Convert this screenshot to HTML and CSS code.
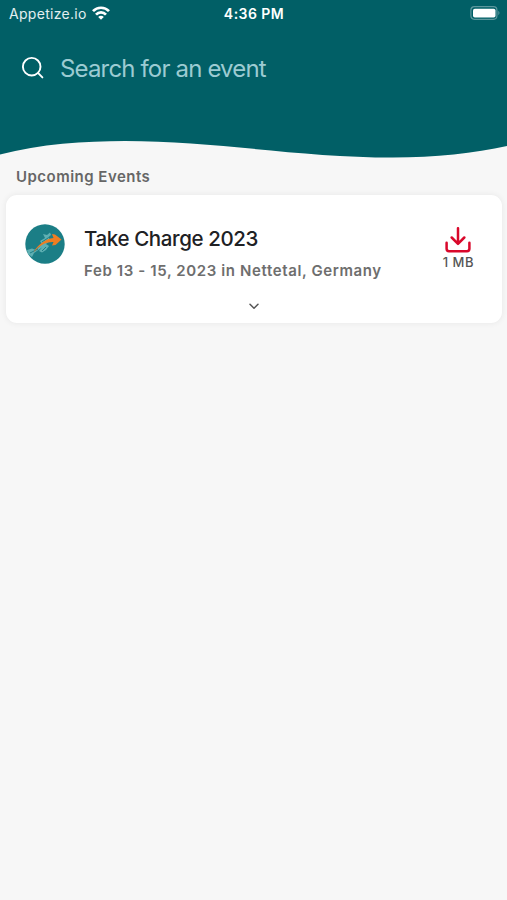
FILE: index.html
```
<!DOCTYPE html>
<html lang="en">
<head>
    <meta charset="UTF-8">
    <meta name="viewport" content="width=device-width, initial-scale=1.0">
    <title>Upcoming Events</title>
    <link rel="stylesheet" href="styles.css">
</head>
<body>

    <header class="header">
        <!-- Status bar -->
        <div class="status">
            <div class="carrier">
                <span class="carrierName">Appetize.io</span>
                <svg width="18" height="14" viewBox="0 0 18 14" fill="none" stroke="#fff" stroke-width="2.7">
                    <path d="M1 5.2C5.3 .6 12.7 .6 17 5.2"/>
                    <path d="M4 8.6C6.8 5.6 11.2 5.6 14 8.6"/>
                    <path d="M9 13.8L6.2 10.9C7.8 9.4 10.2 9.4 11.8 10.9Z" fill="#fff" stroke="none"/>
                </svg>
            </div>
            <span class="time">4:36 PM</span>
            <svg class="battery" width="30" height="14" viewBox="0 0 30 14">
                <rect x=".9" y=".7" width="26" height="12.6" rx="3.5" fill="none" stroke="#5c979d" stroke-width="1.2"/>
                <rect x="3" y="2.7" width="22.5" height="8.8" rx="1.8" fill="#fff"/>
                <path d="M28.3 4.8Q30.7 7 28.3 9.2Z" fill="#5c979d"/>
            </svg>
        </div>

        <!-- Search field -->
        <div class="search">
            <svg width="24" height="24" viewBox="0 0 24 24" fill="none" stroke="#fff" stroke-width="1.9" stroke-linecap="round">
                <circle cx="10.7" cy="10.7" r="8.8"/>
                <path d="M17.2 17.2L21.4 21.4"/>
            </svg>
            <span class="placeholder">Search for an event</span>
        </div>
    </header>

    <!-- Curved bottom edge of the header -->
    <svg class="wave" width="507" height="24" viewBox="0 0 507 24" preserveAspectRatio="none">
        <path d="M0 0H507V11C475 18 435 22.5 393 22.5C300 22.5 215 6 125 6C85 6 40 9 0 19.5Z" fill="#015f66"/>
    </svg>

    <main class="content">
        <h2 class="sectionTitle">Upcoming Events</h2>

        <div class="card">
            <div class="event">
                <svg class="logo" width="40" height="40" viewBox="0 0 40 40">
                    <circle cx="20" cy="20" r="19.7" fill="#1b7e86"/>
                    <path d="M2 26L7 24.5L11 26L17 20L15 17L20 14L18 10L22 11L25 8.5L26 11L23 13.5L26 16L21 20L24 22L21 26L17 28.5L14 27L17 23.5L9 29L7 33L3 30Z" fill="#5fb0b3"/>
                    <path d="M17 18L23 14M5 29L13 25M17 27L21 23" stroke="#1b7e86" stroke-width="1" fill="none"/>
                    <path d="M8.5 28.5C13 20.5 20 15 28.5 14L27 10L30 10.5L36.5 15.5L30.5 21L27 21.5L28.5 18C20.5 17.7 14.5 21.5 8.5 28.5Z" fill="#ef7d21"/>
                </svg>
                <div class="details">
                    <div class="name">Take Charge 2023</div>
                    <div class="date">Feb 13 - 15, 2023 in Nettetal, Germany</div>
                </div>
                <div class="download">
                    <svg width="26" height="26" viewBox="0 0 26 26" fill="none" stroke="#d9082b" stroke-width="2.5" stroke-linecap="round" stroke-linejoin="round">
                        <path d="M13 1.2V16.4M6.7 10.5L13 16.8L19.3 10.5"/>
                        <path d="M1.6 15.8V21.8Q1.6 24.2 4 24.2H22Q24.4 24.2 24.4 21.8V15.8"/>
                    </svg>
                    <span class="size">1 MB</span>
                </div>
            </div>
            <svg class="expand" width="10" height="7" viewBox="0 0 10 7" fill="none" stroke="#555" stroke-width="1.5" stroke-linecap="round" stroke-linejoin="round">
                <path d="M1 1.3L5 5.3L9 1.3"/>
            </svg>
        </div>
    </main>

</body>
</html>
```

FILE: styles.css
```
/* Overall page styling */
body {
    font-family: Inter, "Liberation Sans", sans-serif;
    margin: 0;
    min-height: 100vh;
    background: #f7f7f7;
    color: #666;
}

svg {
    display: block;
    flex-shrink: 0;
}

.header {
    height: 135px;
    background: #015f66;
    color: #fff;
}

/* Status bar */
.status {
    display: grid;
    grid-template-columns: 1fr auto 1fr;
    align-items: center;
    height: 26px;
    padding: 0 7px 0 9px;
}

.carrier {
    display: flex;
    align-items: center;
    gap: 5px;
}

.carrierName {
    font-size: 14px;
    line-height: 18px;
    letter-spacing: 0.3px;
    color: #e3eff0;
    padding-top: 2px;
}

.time {
    font-size: 14px;
    line-height: 18px;
    font-weight: 600;
    letter-spacing: 0.45px;
    padding-top: 2px;
    margin-left: -1px;
}

.battery {
    justify-self: end;
}

/* Search field */
.search {
    display: flex;
    align-items: center;
    gap: 15px;
    padding: 27px 21px 0;
}

.placeholder {
    font-size: 24px;
    line-height: 28px;
    letter-spacing: -0.84px;
    color: #9ccbd2;
    padding-top: 2px;
}

.wave {
    width: 100%;
}

/* Event list */
.content {
    padding: 0 5px 0 6px;
}

.sectionTitle {
    margin: 0;
    padding: 8px 10px 8px;
    font-size: 15px;
    line-height: 20px;
    font-weight: 600;
    letter-spacing: 0.48px;
}

.card {
    height: 128px;
    background: #fff;
    border-radius: 11px;
    box-shadow: 0 0 6px rgba(0, 0, 0, 0.07);
}

.event {
    display: flex;
    height: 108px;
    padding: 0 28px 0 19px;
    box-sizing: border-box;
}

.logo {
    margin-top: 29px;
}

.details {
    flex: 1;
    padding: 31px 0 0 19px;
}

.name {
    font-size: 20.5px;
    line-height: 26px;
    font-weight: 500;
    letter-spacing: -0.38px;
    color: #202124;
}

.date {
    margin-top: 9px;
    font-size: 15px;
    line-height: 20px;
    font-weight: 600;
    letter-spacing: 0.61px;
    color: #6e6e6e;
}

.download {
    display: flex;
    flex-direction: column;
    align-items: center;
    padding-top: 32px;
}

.size {
    font-size: 13px;
    line-height: 18px;
    font-weight: 500;
    letter-spacing: 0.5px;
    color: #555;
}

.expand {
    margin: 0 auto;
}
```
